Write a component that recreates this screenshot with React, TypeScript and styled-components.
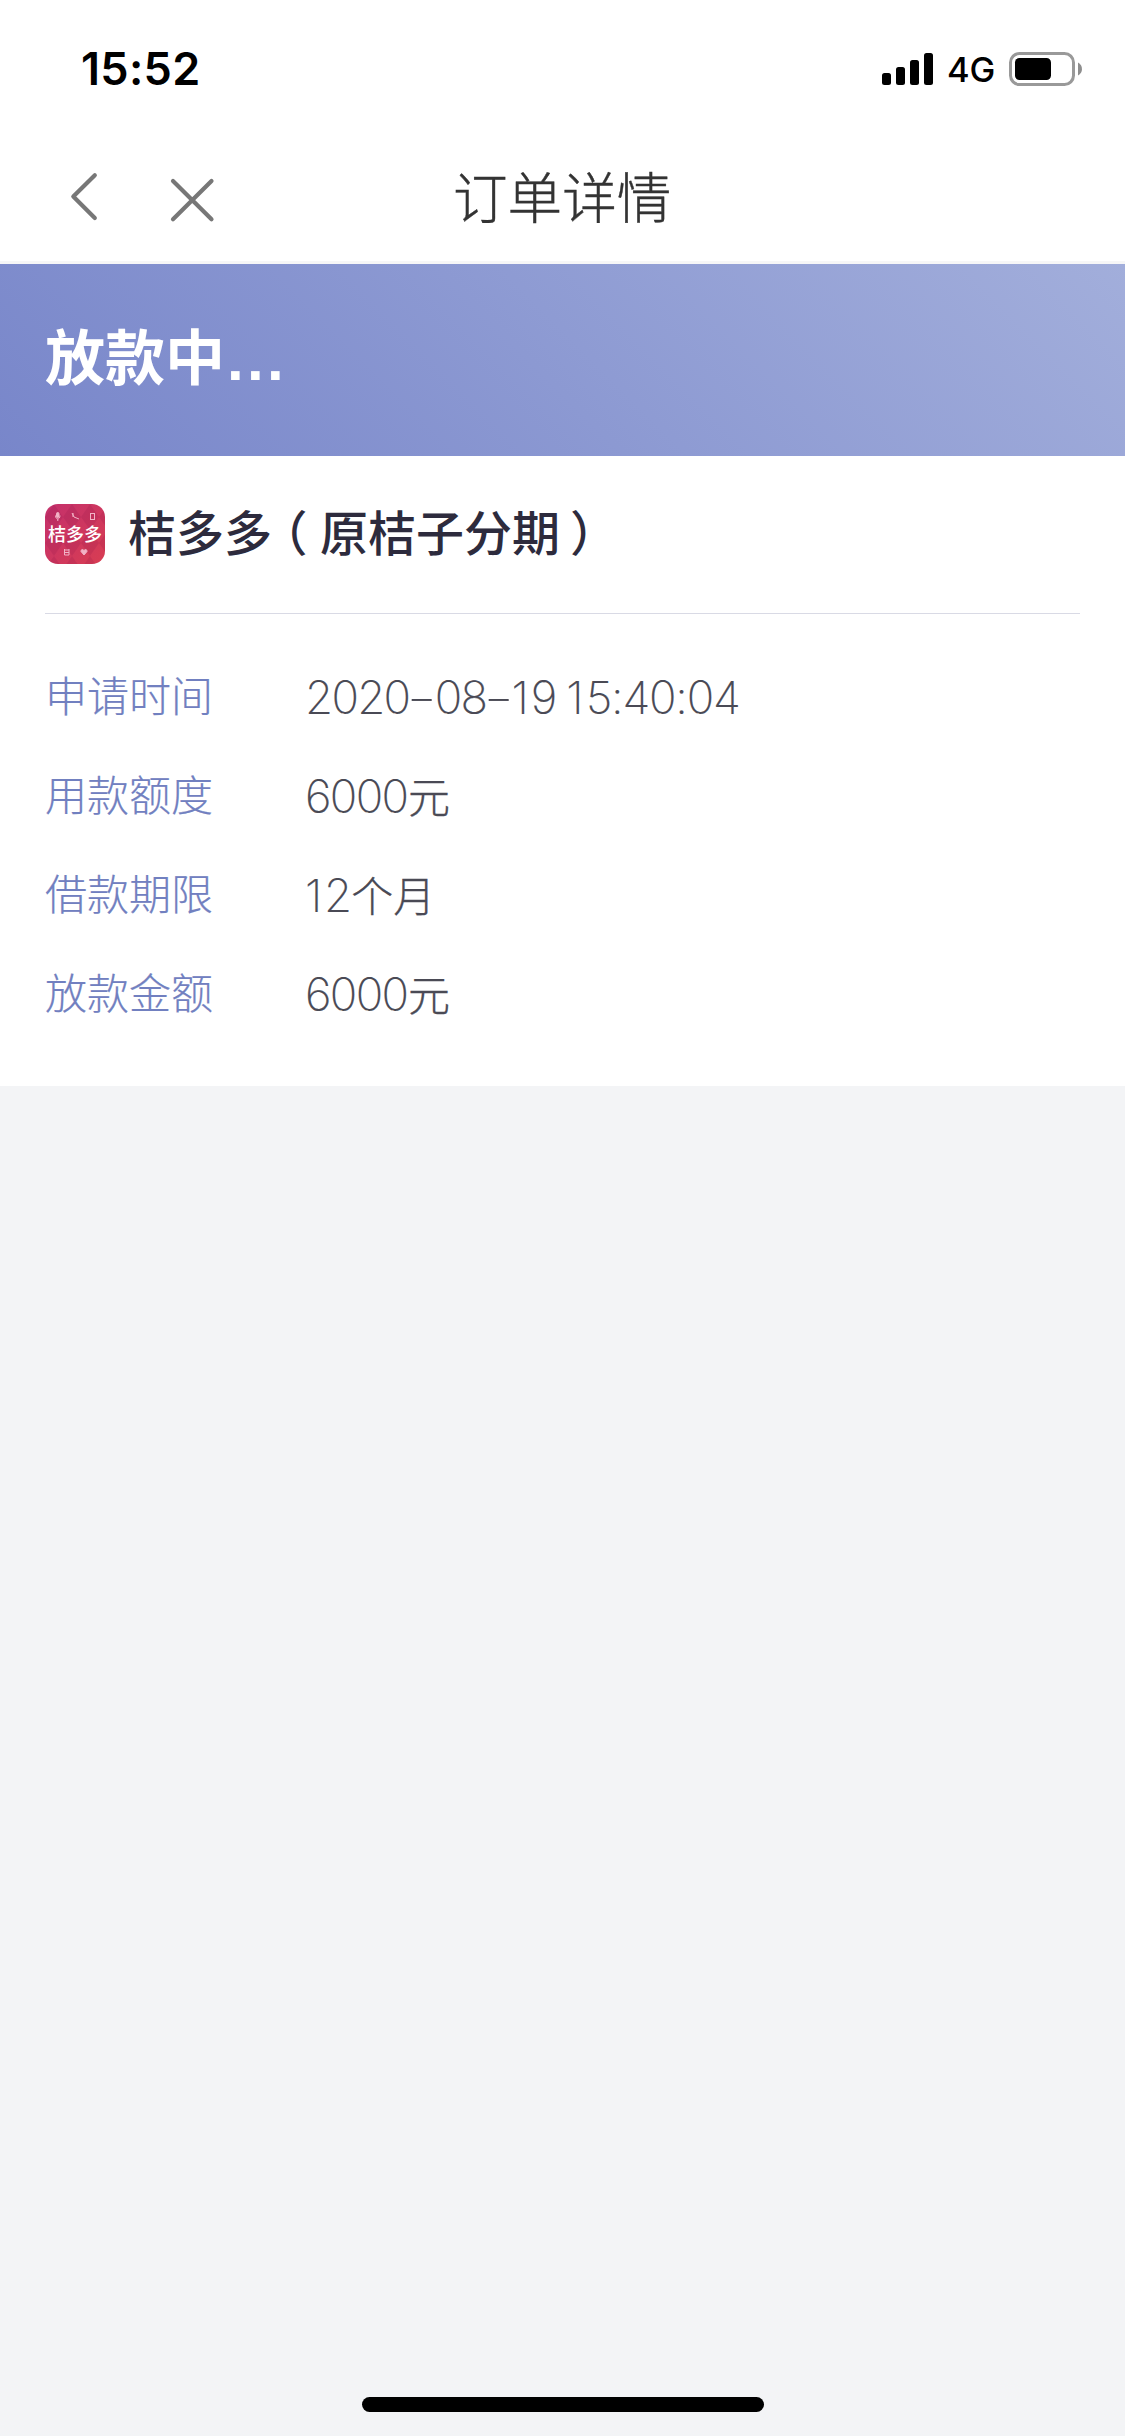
import React from 'react';
import styled, { createGlobalStyle } from 'styled-components';

const cjk = `"Noto Sans CJK SC", sans-serif`;

const GlobalStyle = createGlobalStyle`
  * { box-sizing: border-box; }
  body { margin: 0; background: #f3f4f6; font-family: ${cjk}; }
`;

const Screen = styled.div`
  width: 1125px;
  height: 2436px;
  display: flex;
  flex-direction: column;
  background: #f3f4f6;
  overflow: hidden;
`;

const StatusBar = styled.header`
  height: 132px;
  padding: 0 43px 0 81px;
  display: flex;
  justify-content: space-between;
  background: #fff;
`;

const Clock = styled.time`
  margin-top: 42px;
  font: 600 45px/54px Inter, sans-serif;
  letter-spacing: 0.3px;
  color: #000;
`;

const Indicators = styled.div`
  height: 34px;
  margin-top: 52px;
  display: flex;
  align-items: center;
`;

const Network = styled.span`
  width: 62px;
  margin-left: 13px;
  padding-top: 2px;
  font: 500 34.5px/34px Inter, sans-serif;
  letter-spacing: -0.2px;
  color: #000;
`;

const NavBar = styled.nav`
  height: 132px;
  padding-left: 66px;
  display: grid;
  grid-template-columns: 102px 222px 1fr;
  background: #fff;
  border-bottom: 3px solid #f6f6f7;
`;

const NavButton = styled.button`
  align-self: start;
  justify-self: start;
  margin: 38px 0 0;
  padding: 0;
  border: 0;
  background: none;
  line-height: 0;
`;

const NavTitle = styled.h1`
  margin: 23px 0 0 63px;
  font-size: 54.6px;
  line-height: 80px;
  font-weight: 300;
  color: #333;
  -webkit-text-stroke: 0.4px #333;
`;

const Banner = styled.section`
  height: 192px;
  padding: 46px 45px;
  background: linear-gradient(45deg, #7886ca, #a2aedb);
`;

const BannerText = styled.h2`
  margin: 0;
  display: flex;
  align-items: baseline;
  font-size: 60px;
  line-height: 88px;
  font-weight: 700;
  color: #fff;
`;

const Dots = styled.span`
  margin-left: 2px;
  font-family: "Liberation Sans", sans-serif;
  letter-spacing: 3.3px;
`;

const Card = styled.main`
  height: 630px;
  padding: 0 45px;
  background: #fff;
`;

const Product = styled.div`
  height: 158px;
  padding-top: 48px;
  display: flex;
  align-items: flex-start;
  gap: 23px;
  border-bottom: 1px solid #d9dae5;
`;

const Logo = styled.svg`
  width: 60px;
  height: 60px;
  flex: none;
`;

const ProductName = styled.h3`
  margin: -10px 0 0;
  font-size: 48px;
  line-height: 72px;
  font-weight: 500;
  color: #2d2b3d;
  white-space: nowrap;
`;

const Paren = styled.span<{ $before: number }>`
  font-feature-settings: "halt";
  margin-left: ${(p) => p.$before}px;
  margin-right: ${(p) => 24 - p.$before}px;
`;

const Details = styled.dl`
  margin: 0;
  padding-top: 30px;
`;

const Row = styled.div`
  height: 99px;
  display: grid;
  grid-template-columns: 260px 1fr;
  align-items: center;
`;

const Label = styled.dt`
  font-size: 42px;
  font-weight: 300;
  line-height: 60px;
  color: #7180c0;
  -webkit-text-stroke: 0.2px #7180c0;
`;

const Value = styled.dd`
  margin: 0;
  padding-top: 6px;
  font-size: 42px;
  font-weight: 300;
  line-height: 60px;
  color: #4a4a55;
`;

const Digits = styled.span<{ $time?: boolean }>`
  margin-left: ${(p) => (p.$time ? '-0.3px' : '0')};
  font-family: Inter, sans-serif;
  font-size: 45.5px;
  font-weight: 200;
  font-kerning: none;
  letter-spacing: ${(p) => (p.$time ? '-1.2px' : '-1.7px')};
  white-space: pre;
  -webkit-text-stroke: 0.2px #4a4a55;
`;

const Unit = styled.span`
  margin-left: 0.8px;
  -webkit-text-stroke: 0.3px #4a4a55;
`;

const One = styled.span`
  margin-right: 3.5px;
`;

const Dash = styled.span`
  display: inline-block;
  width: 25.3px;
  letter-spacing: 0;
  text-align: center;
  transform: scaleX(1.5);
`;

const HomeBar = styled.div`
  width: 402px;
  height: 15px;
  margin: auto auto 24px;
  border-radius: 8px;
  background: #000;
`;

const rows = [
  { label: '申请时间', digits: '2020-08-19 ', time: '15:40:04', unit: '' },
  { label: '用款额度', digits: '6000', unit: '元' },
  { label: '借款期限', digits: '12', unit: '个月' },
  { label: '放款金额', digits: '6000', unit: '元' },
];

const spaced = (text: string) =>
  text.split('').map((c, i) => {
    if (c === '-') return <Dash key={i}>-</Dash>;
    if (c === '1') return <One key={i}>1</One>;
    return c;
  });

function Signal() {
  return (
    <svg width="52" height="34" viewBox="0 0 52 34">
      <rect x="0" y="21" width="9" height="12" rx="2.5" />
      <rect x="14" y="15" width="9" height="18" rx="2.5" />
      <rect x="28" y="8" width="9" height="25" rx="2.5" />
      <rect x="42" y="1" width="9" height="32" rx="2.5" />
    </svg>
  );
}

function Battery() {
  return (
    <svg width="73" height="34" viewBox="0 0 73 34">
      <rect x="1.5" y="1.5" width="63" height="31" rx="9" fill="none" stroke="#999" strokeWidth="3" />
      <rect x="6" y="6" width="36" height="22" rx="4.5" />
      <path d="M69 10.5C74.3 13 74.3 21 69 23.5Z" fill="#8e8e8e" />
    </svg>
  );
}

function ProductLogo() {
  return (
    <Logo viewBox="0 0 60 60">
      <defs>
        <linearGradient id="base" x1="0" y1="0" x2="1" y2="1">
          <stop offset="0" stopColor="#c4306c" />
          <stop offset="1" stopColor="#d83d52" />
        </linearGradient>
        <pattern id="diamonds" width="18" height="26" patternUnits="userSpaceOnUse">
          <path d="M9 0L18 13L9 26L0 13Z" fill="#6b0038" opacity="0.12" />
        </pattern>
      </defs>
      <rect width="60" height="60" rx="13" fill="url(#base)" />
      <rect width="60" height="60" rx="13" fill="url(#diamonds)" />
      <g fill="none" stroke="#f2b3c6" strokeWidth="1">
        <rect x="11.5" y="8.5" width="2.5" height="5" rx="1.2" fill="#f2b3c6" />
        <path d="M10.5 11.5C10.5 16 15 16 15 11.5M12.8 15V17" />
        <path d="M27 9L29 13L34 15M28 9V13" />
        <rect x="45.5" y="9.5" width="4" height="6" />
        <path d="M19.5 46H24M19.5 48.5H24M19.5 51H24M19.5 45V51M24 45V51" />
        <path d="M39 51L36 47.5C36 45 38 45 39 46.5C40 45 42 45 42 47.5Z" fill="#f2b3c6" />
      </g>
      <text x="30" y="36.5" textAnchor="middle" fontSize="18" fontWeight="500" fill="#fff" fontFamily={cjk}>
        桔多多
      </text>
    </Logo>
  );
}

export default function App() {
  return (
    <>
      <GlobalStyle />
      <Screen>
        <StatusBar>
          <Clock>15:52</Clock>
          <Indicators>
            <Signal />
            <Network>4G</Network>
            <Battery />
          </Indicators>
        </StatusBar>
        <NavBar>
          <NavButton aria-label="返回">
            <svg width="36" height="54" viewBox="66 170 36 54" fill="none" stroke="#777" strokeWidth="4.2" strokeLinecap="round" strokeLinejoin="round">
              <path d="M94.8 175.2L73.3 196.6L94.8 218" />
            </svg>
          </NavButton>
          <NavButton aria-label="关闭">
            <svg width="54" height="54" viewBox="168 170 54 54" fill="none" stroke="#777" strokeWidth="4.2" strokeLinecap="round">
              <path d="M173 181L211.5 219.3M211.5 181L173 219.3" />
            </svg>
          </NavButton>
          <NavTitle>订单详情</NavTitle>
        </NavBar>
        <Banner>
          <BannerText>放款中<Dots>...</Dots></BannerText>
        </Banner>
        <Card>
          <Product>
            <ProductLogo />
            <ProductName>
              桔多多<Paren $before={11.5}>（</Paren>原桔子分期<Paren $before={10}>）</Paren>
            </ProductName>
          </Product>
          <Details>
            {rows.map((row) => (
              <Row key={row.label}>
                <Label>{row.label}</Label>
                <Value>
                  <Digits>{spaced(row.digits)}</Digits>
                  {row.time && <Digits $time>{spaced(row.time)}</Digits>}
                  {row.unit && <Unit>{row.unit}</Unit>}
                </Value>
              </Row>
            ))}
          </Details>
        </Card>
        <HomeBar />
      </Screen>
    </>
  );
}
